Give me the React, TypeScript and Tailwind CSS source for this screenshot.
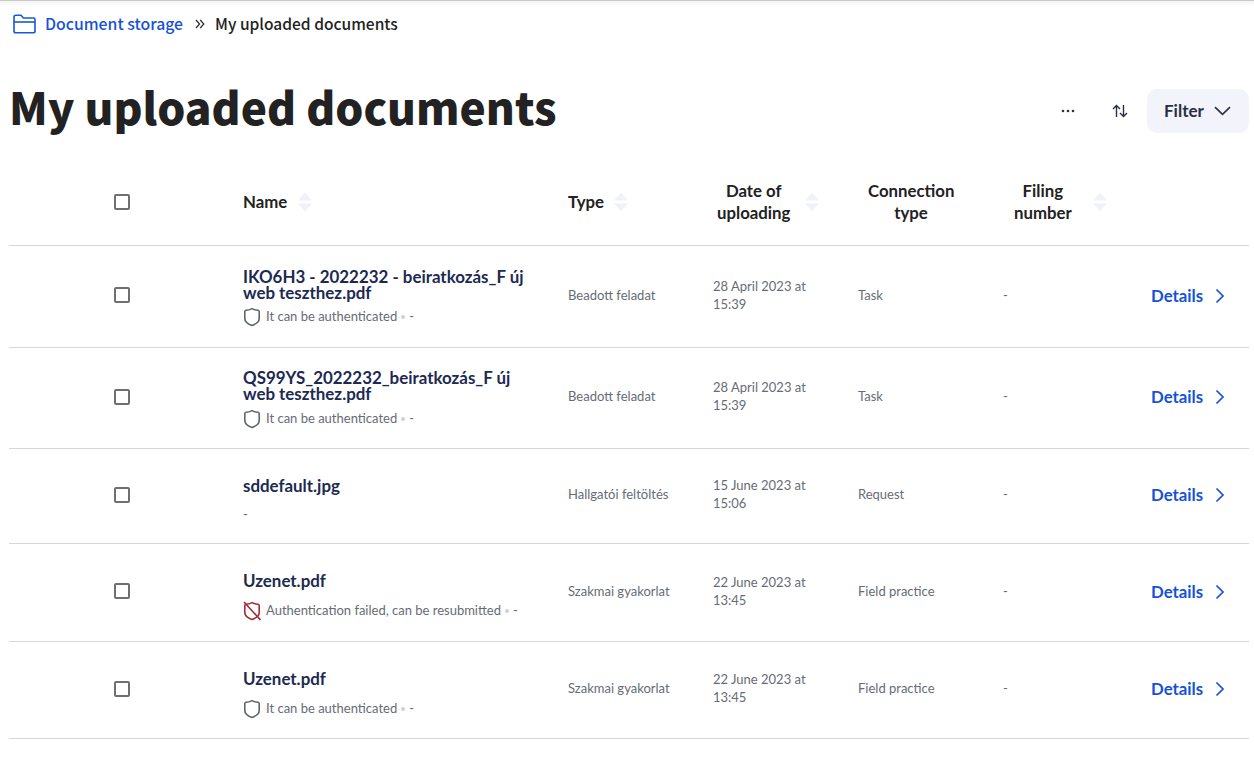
import React from "react";

const lato = "font-['Lato',sans-serif]";
const cjk = "font-['Noto_Sans_CJK_SC',sans-serif]";
const cols = "grid grid-cols-[234px_325px_145px_145px_145px_148px_98px] items-center";

function Check() {
  return <span className="block w-4 h-4 border-2 border-[#6f6f6f] rounded-[2px] bg-white" />;
}

function Sort() {
  return (
    <svg width="14" height="20" viewBox="0 0 14 20" className="shrink-0">
      <path d="M7 0.5L14 8.5H0Z" fill="#f0f1fb" />
      <path d="M0 11.5H14L7 19.5Z" fill="#f0f1fb" />
    </svg>
  );
}

function Shield({ failed }: { failed?: boolean }) {
  const c = failed ? "#a32a34" : "#5f6670";
  return (
    <svg width="18" height="20" viewBox="0 0 18 20" fill="none" className="shrink-0">
      <path
        d="M9 1.6C11 2.7 13 3.2 15 3.3C15.9 3.4 16.2 3.9 16.2 4.6V11.5C16.2 14.6 12.6 17.2 9 18.5C5.4 17.2 1.8 14.6 1.8 11.5V4.6C1.8 3.9 2.1 3.4 3 3.3C5 3.2 7 2.7 9 1.6Z"
        stroke={c}
        strokeWidth="1.6"
        strokeLinejoin="round"
      />
      {failed && <path d="M1 1L17.5 19" stroke={c} strokeWidth="1.6" />}
    </svg>
  );
}

type Row = {
  name: string[];
  status?: string;
  failed?: boolean;
  type: string;
  date: string[];
  conn: string;
  h: string;
  statusMt: string;
  namePt: string;
  checkPb: string;
};

const rows: Row[] = [
  { name: ["IKO6H3 - 2022232 - beiratkozás_F új", "web teszthez.pdf"], status: "It can be authenticated", type: "Beadott feladat", date: ["28 April 2023 at", "15:39"], conn: "Task", h: "h-[102px]", statusMt: "mt-[6px]", namePt: "pt-[4px]", checkPb: "pb-[2px]" },
  { name: ["QS99YS_2022232_beiratkozás_F új", "web teszthez.pdf"], status: "It can be authenticated", type: "Beadott feladat", date: ["28 April 2023 at", "15:39"], conn: "Task", h: "h-[101px]", statusMt: "mt-[7px]", namePt: "pt-[5px]", checkPb: "pb-0" },
  { name: ["sddefault.jpg"], type: "Hallgatói feltöltés", date: ["15 June 2023 at", "15:06"], conn: "Request", h: "h-[95px]", statusMt: "mt-[10px]", namePt: "pt-[12px]", checkPb: "pb-0" },
  { name: ["Uzenet.pdf"], status: "Authentication failed, can be resubmitted", failed: true, type: "Szakmai gyakorlat", date: ["22 June 2023 at", "13:45"], conn: "Field practice", h: "h-[98px]", statusMt: "mt-[12px]", namePt: "pt-[10px]", checkPb: "pb-[2px]" },
  { name: ["Uzenet.pdf"], status: "It can be authenticated", type: "Szakmai gyakorlat", date: ["22 June 2023 at", "13:45"], conn: "Field practice", h: "h-[97px]", statusMt: "mt-[12px]", namePt: "pt-[12px]", checkPb: "pb-0" },
];

export default function App() {
  return (
    <div className={`${lato} w-[1254px] h-[768px] bg-white overflow-hidden text-[#222222]`}>
      <div className="h-px bg-[#c9c9c9]" />
      <div className="h-[6px] bg-gradient-to-b from-[#f4f4f4] to-white" />

      <nav className={`${cjk} flex items-center h-[34px] pl-[13px] text-[15.8px] font-medium`}>
        <svg width="23" height="20" viewBox="0 0 23 20" fill="none" className="shrink-0">
          <path
            d="M1 17V3C1 2 1.7 1.2 2.8 1.2H8L10.4 4H20.4C21.4 4 22 4.8 22 5.6V17C22 18 21.3 18.8 20.3 18.8H2.8C1.7 18.8 1 18 1 17Z"
            stroke="#1a56db"
            strokeWidth="1.6"
            strokeLinejoin="round"
          />
          <path d="M1 8H22" stroke="#1a56db" strokeWidth="1.6" />
        </svg>
        <span className="ml-[9px] text-[#1652d9]">Document storage</span>
        <svg width="10" height="10" viewBox="0 0 10 10" fill="none" className="ml-[12px] shrink-0">
          <path d="M1 1L4.6 5L1 9M5.2 1L8.8 5L5.2 9" stroke="#333" strokeWidth="1.3" />
        </svg>
        <span className="ml-[10px] text-[15.55px] text-[#222222]">My uploaded documents</span>
      </nav>

      <header className="flex items-center justify-between h-[64px] mt-[38px] pl-[9px] pr-[5px]">
        <h1 className={`${cjk} text-[44.2px] leading-none font-black text-[#222222] pb-[10px]`}>My uploaded documents</h1>
        <div className="flex items-center">
          <svg width="14" height="4" viewBox="0 0 14 4" className="mr-[37px]">
            <circle cx="2" cy="2" r="1.3" fill="#2a2f45" />
            <circle cx="7" cy="2" r="1.3" fill="#2a2f45" />
            <circle cx="12" cy="2" r="1.3" fill="#2a2f45" />
          </svg>
          <svg width="16" height="14" viewBox="0 0 16 14" fill="none" className="mr-[19px]">
            <path d="M4.5 13V1.5M1 5L4.5 1.5L8 5" stroke="#2a2f45" strokeWidth="1.4" />
            <path d="M11.5 1V12.5M8 9L11.5 12.5L15 9" stroke="#2a2f45" strokeWidth="1.4" />
          </svg>
          <button className="flex items-center w-[102px] h-[44px] pl-[17px] rounded-[10px] bg-[#f2f3fb] text-[17px] font-bold text-[#2a2f45]">
            Filter
            <svg width="17" height="10" viewBox="0 0 17 10" fill="none" className="ml-[10px]">
              <path d="M1 1.2L8.5 8.4L16 1.2" stroke="#2a2f45" strokeWidth="1.6" />
            </svg>
          </button>
        </div>
      </header>

      <div className="mx-[9px] w-[1240px] mt-[14px]">
        <div className={`${cols} h-[89px] pt-[2px] border-b border-[#d6d6d6] text-[16.8px] leading-[22px] font-bold text-[#222222]`}>
          <div className="pl-[105px]"><Check /></div>
          <div className="flex items-center gap-[11px]">Name <Sort /></div>
          <div className="flex items-center gap-[10px]">Type <Sort /></div>
          <div className="flex items-center gap-[15px] pl-[4px]">
            <div className="text-center">Date of<br />uploading</div>
            <Sort />
          </div>
          <div className="pl-[10px]"><div className="text-center w-[86px]">Connection<br />type</div></div>
          <div className="flex items-center gap-[21px] pl-[11px]">
            <div className="text-center">Filing<br />number</div>
            <Sort />
          </div>
          <div />
        </div>

        {rows.map((r, i) => (
          <div key={i} className={`${cols} ${r.h} pb-[2px] border-b border-[#d6d6d6] text-[13px] text-[#666c75]`}>
            <div className={`pl-[105px] ${r.checkPb}`}><Check /></div>
            <div className={r.namePt}>
              <div className="text-[16.9px] leading-[16px] font-bold text-[#1c2a52] whitespace-nowrap">
                {r.name.map((n) => <div key={n}>{n}</div>)}
              </div>
              {r.status ? (
                <div className={`${r.statusMt} flex items-center h-5 whitespace-nowrap`}>
                  <Shield failed={r.failed} />
                  <span className="ml-[5px]">{r.status}</span>
                  <span className="ml-[4px] w-[4px] h-[4px] rounded-full bg-[#d0d0d0]" />
                  <span className="ml-[4px]">-</span>
                </div>
              ) : (
                <div className={`${r.statusMt} h-5 leading-5`}>-</div>
              )}
            </div>
            <div>{r.type}</div>
            <div className="leading-[18px] pb-[2px]">
              {r.date.map((d) => <div key={d}>{d}</div>)}
            </div>
            <div>{r.conn}</div>
            <div>-</div>
            <div className="flex items-center text-[16.8px] font-bold text-[#1652d9]">
              Details
              <svg width="10" height="16" viewBox="0 0 10 16" fill="none" className="ml-[12px]">
                <path d="M1.5 1.5L8 8L1.5 14.5" stroke="#1652d9" strokeWidth="1.7" />
              </svg>
            </div>
          </div>
        ))}
      </div>
    </div>
  );
}
